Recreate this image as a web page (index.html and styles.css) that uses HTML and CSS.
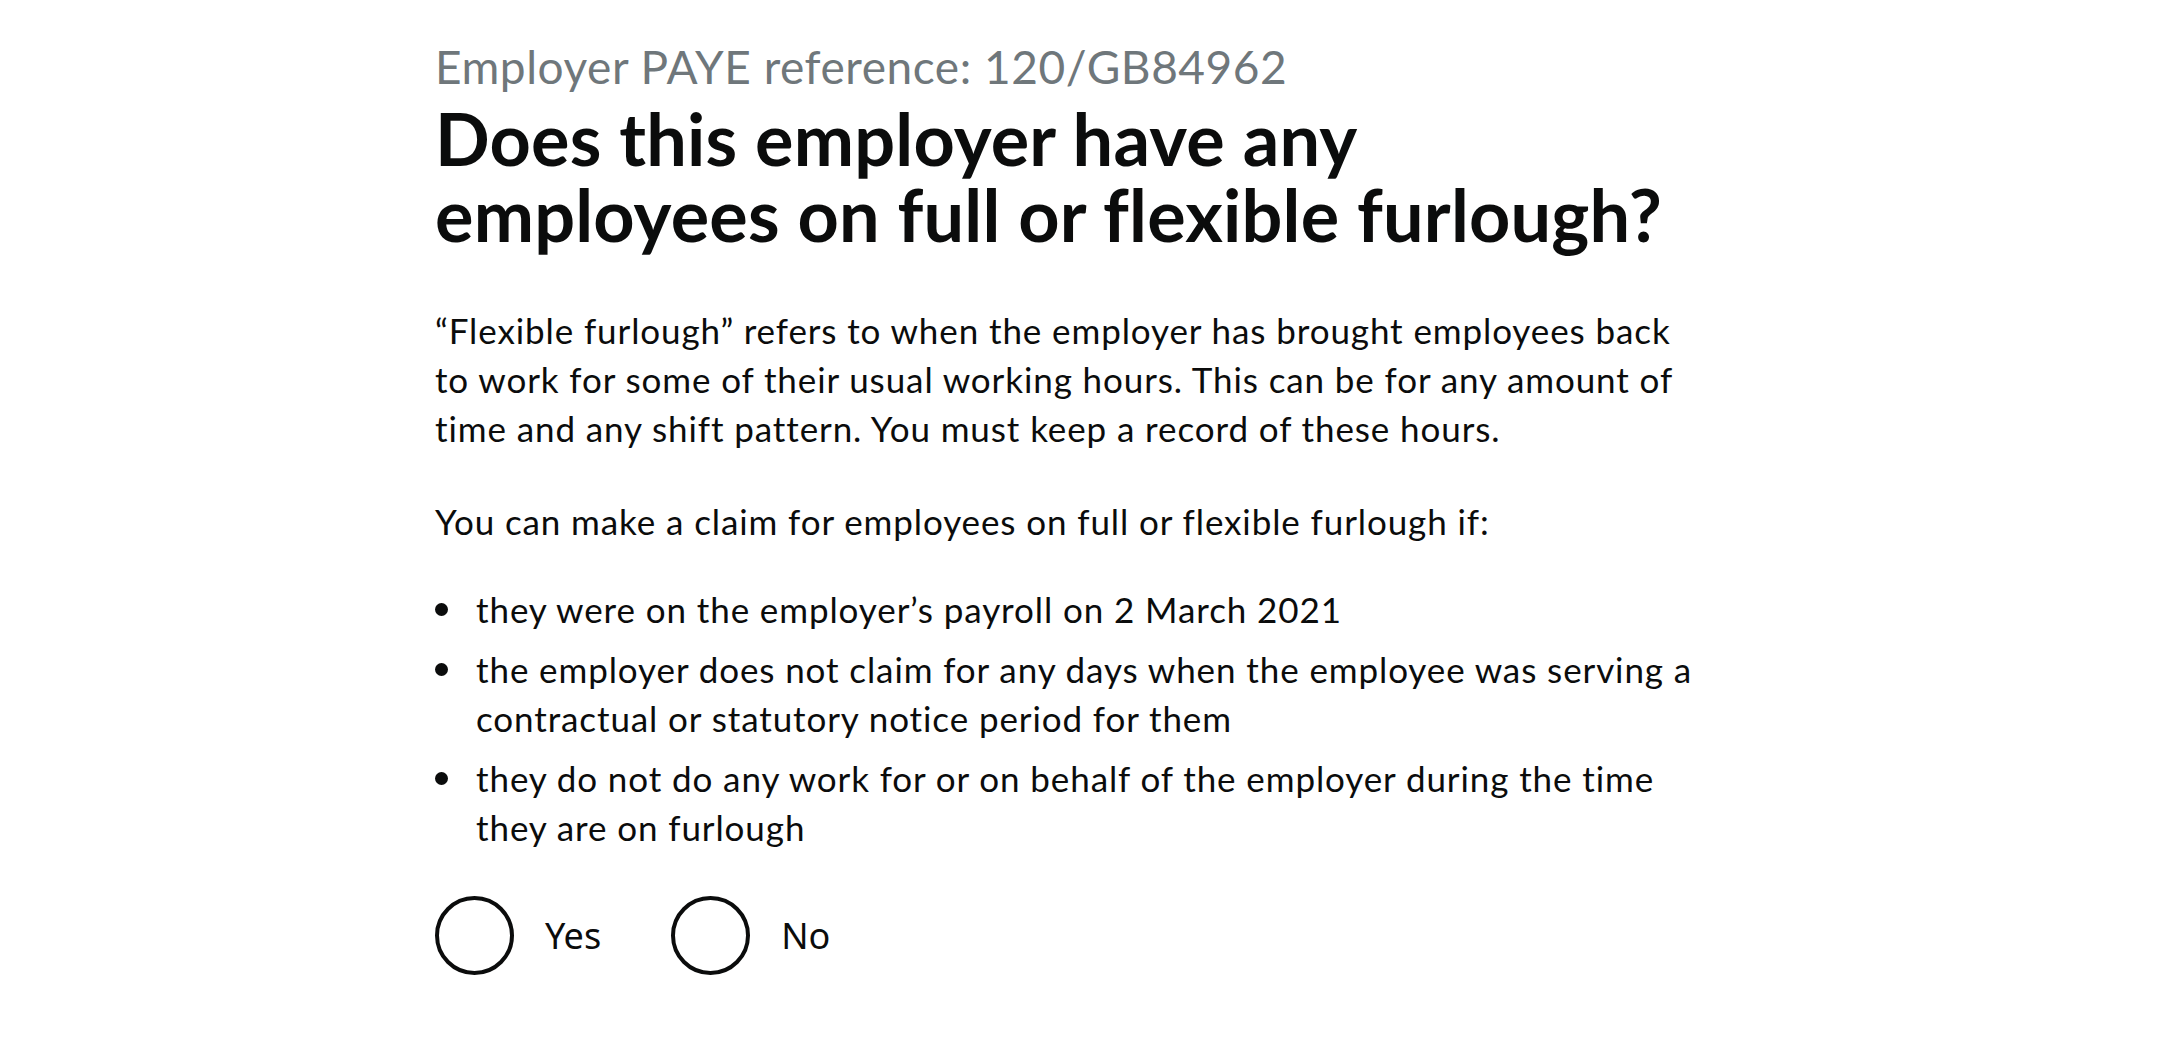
FILE: index.html
```html
<!DOCTYPE html>
<html lang="en">
<head>
<meta charset="utf-8">
<title>Does this employer have any employees on full or flexible furlough?</title>
<link rel="stylesheet" href="styles.css">
</head>
<body>
<main class="page">
  <div class="column">
    <span class="caption">Employer PAYE reference: 120/GB84962</span>
    <h1 class="heading">Does this employer have any employees on full or flexible furlough?</h1>
    <p class="body">“Flexible furlough” refers to when the employer has brought employees back to work for some of their usual working hours. This can be for any amount of time and any shift pattern. You must keep a record of these hours.</p>
    <p class="body">You can make a claim for employees on full or flexible furlough if:</p>
    <ul class="bullets">
      <li>they were on the employer’s payroll on 2 March 2021</li>
      <li>the employer does not claim for any days when the employee was serving a contractual or statutory notice period for them</li>
      <li>they do not do any work for or on behalf of the employer during the time they are on furlough</li>
    </ul>
    <div class="radios">
      <label class="radio"><span class="radio-circle"></span><span class="radio-label">Yes</span></label>
      <label class="radio"><span class="radio-circle"></span><span class="radio-label">No</span></label>
    </div>
  </div>
</main>
</body>
</html>
```

FILE: styles.css
```css
html, body {
  margin: 0;
  padding: 0;
  background: #ffffff;
}

body {
  font-family: Lato, "Noto Sans", sans-serif;
  color: #0b0c0c;
}

.page {
  width: 1302px;
  margin: 0 auto;
  padding-top: 39px;
}

.column {
  max-width: 1265px;
}

.caption {
  display: block;
  font-size: 46px;
  line-height: 56px;
  color: #6f777b;
  font-weight: 400;
  letter-spacing: 0.55px;
}

.heading {
  max-width: 1250px;
  margin: 5px 0 0 0;
  font-size: 72px;
  line-height: 76px;
  font-weight: 700;
  letter-spacing: 0.2px;
}

.body {
  margin: 54px 0 0 0;
  font-size: 35px;
  line-height: 49px;
  letter-spacing: 0.9px;
}

.body + .body {
  margin-top: 44px;
}

.bullets {
  margin: 39px 0 0 0;
  padding: 0 0 0 41px;
  list-style: none;
  font-size: 35px;
  line-height: 49px;
  letter-spacing: 0.9px;
}

.bullets li {
  position: relative;
  margin-top: 11px;
}

.bullets li:first-child {
  margin-top: 0;
}

.bullets li::before {
  content: "";
  position: absolute;
  left: -41px;
  top: 18px;
  width: 13px;
  height: 13px;
  border-radius: 50%;
  background: #0b0c0c;
}

.radios {
  display: flex;
  margin-top: 44px;
  gap: 70px;
}

.radio {
  display: flex;
  align-items: center;
  gap: 31px;
}

.radio-circle {
  box-sizing: border-box;
  width: 79px;
  height: 79px;
  border: 4px solid #0b0c0c;
  border-radius: 50%;
}

.radio-label {
  font-family: "Noto Sans", "Open Sans", sans-serif;
  font-size: 36px;
  line-height: 44px;
}
```
